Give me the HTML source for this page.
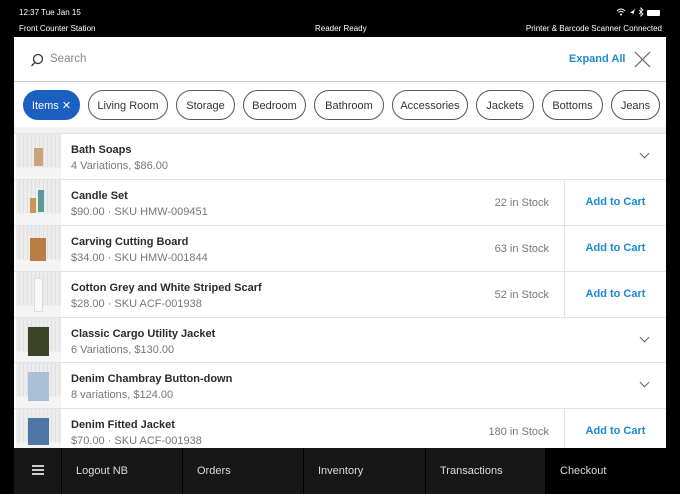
<!DOCTYPE html><html><head><style>
*{margin:0;padding:0;box-sizing:border-box}
body{width:680px;height:494px;background:#000;font-family:"Liberation Sans",sans-serif;position:relative;overflow:hidden}
.a{position:absolute}
.st{color:#fff;font-size:8px}
.panel{left:14px;top:37px;width:652px;height:411px;background:#fff;overflow:hidden}
.chip{position:absolute;top:53px;height:30px;border:1px solid #555;border-radius:15px;font-size:11px;color:#333;line-height:30px;text-align:center}
.row{position:absolute;left:0;width:652px;height:46px;border-top:1px solid #e3e3e3;background:#fff}
.th{position:absolute;left:2px;top:0;width:45px;height:45px;background:linear-gradient(180deg,transparent 0 75%,#f4f4f4 75%),repeating-linear-gradient(90deg,#ececec 0 3px,#e0e0e0 3px 4px)}
.th i{position:absolute;display:block}
.n{position:absolute;left:57px;top:10px;font-size:11px;color:#2b2b2b;font-weight:600}
.s{position:absolute;left:57px;top:26px;font-size:11px;color:#777}
.stk{position:absolute;right:117px;top:17px;font-size:11px;color:#777}
.add{position:absolute;left:550px;top:0;width:102px;height:45px;border-left:1px solid #e3e3e3;color:#1a8ad4;font-size:11px;text-align:center;line-height:45px;font-weight:600}
.chev{position:absolute;right:18px;top:16px;width:7px;height:7px;border-right:1.3px solid #666;border-bottom:1.3px solid #666;transform:rotate(45deg)}
.nav{top:448px;left:14px;width:652px;height:46px;background:#171717}
.nv{position:absolute;top:0;height:46px;line-height:46px;color:#ddd;font-size:11px;border-left:1px solid #000;padding-left:14px}
</style></head><body>
<div class="a st" style="left:19px;top:8px">12:37 Tue Jan 15</div>
<div class="a st" style="left:19px;top:24px">Front Counter Station</div>
<div class="a st" style="left:315px;top:24px">Reader Ready</div>
<div class="a st" style="right:18px;top:24px">Printer &amp; Barcode Scanner Connected</div>
<svg class="a" style="left:616px;top:7px" width="30" height="10"><path d="M1 4Q5 0 9 4M2.5 5.5Q5 3 7.5 5.5" stroke="#fff" fill="none" stroke-width="1"/><circle cx="5" cy="7.5" r="1" fill="#fff"/><path d="M14 6L19 2L17 8L16.5 6Z" fill="#fff"/><path d="M23 3L27 7L25 9V1L27 3L23 7" stroke="#fff" fill="none" stroke-width=".8"/></svg>
<div class="a" style="right:20px;top:10px;width:13px;height:6px;background:#fff;border-radius:1px"></div>
<div class="a panel">
 <div class="a" style="left:0;top:0;width:652px;height:45px;border-bottom:1px solid #ccc"></div>
 <svg class="a" style="left:16px;top:16px" width="14" height="14"><circle cx="8" cy="6" r="4.5" fill="none" stroke="#333" stroke-width="1.3"/><line x1="5" y1="9.3" x2="1.5" y2="13" stroke="#333" stroke-width="1.3"/></svg>
 <div class="a" style="left:36px;top:16px;font-size:11.5px;color:#888">Search</div>
 <div class="a" style="left:555px;top:16px;font-size:11px;color:#1a8ad4;font-weight:bold">Expand All</div>
 <svg class="a" style="left:620px;top:14px" width="17" height="17"><path d="M1 1L16 16M16 1L1 16" stroke="#666" stroke-width="1.2"/></svg>
 <div class="chip" style="left:9px;width:57px;background:#1b5fc1;border-color:#1b5fc1;color:#fff">Items ✕</div>
 <div class="chip" style="left:74px;width:80px">Living Room</div>
 <div class="chip" style="left:162px;width:59px">Storage</div>
 <div class="chip" style="left:229px;width:63px">Bedroom</div>
 <div class="chip" style="left:300px;width:70px">Bathroom</div>
 <div class="chip" style="left:378px;width:76px">Accessories</div>
 <div class="chip" style="left:462px;width:58px">Jackets</div>
 <div class="chip" style="left:528px;width:61px">Bottoms</div>
 <div class="chip" style="left:597px;width:49px">Jeans</div>
 <div class="a" style="left:0;top:90px;width:652px;height:6px;background:#f1f2f4"></div>

 <div class="row" style="top:96px"><div class="th"><i style="left:18px;top:14px;width:9px;height:18px;background:#c8a57a"></i></div><div class="n">Bath Soaps</div><div class="s">4 Variations, $86.00</div><div class="chev"></div></div>
 <div class="row" style="top:142px"><div class="th"><i style="left:14px;top:18px;width:6px;height:15px;background:#c89a50"></i><i style="left:22px;top:10px;width:6px;height:22px;background:#5c9a9a"></i></div><div class="n">Candle Set</div><div class="s">$90.00 · SKU HMW-009451</div><div class="stk">22 in Stock</div><div class="add">Add to Cart</div></div>
 <div class="row" style="top:188px"><div class="th"><i style="left:14px;top:12px;width:16px;height:23px;background:#b77d45"></i></div><div class="n">Carving Cutting Board</div><div class="s">$34.00 · SKU HMW-001844</div><div class="stk">63 in Stock</div><div class="add">Add to Cart</div></div>
 <div class="row" style="top:234px"><div class="th"><i style="left:18px;top:6px;width:9px;height:34px;background:#f8f8f8;border:1px solid #ddd"></i></div><div class="n">Cotton Grey and White Striped Scarf</div><div class="s">$28.00 · SKU ACF-001938</div><div class="stk">52 in Stock</div><div class="add">Add to Cart</div></div>
 <div class="row" style="top:280px"><div class="th"><i style="left:12px;top:9px;width:21px;height:29px;background:#3c4428"></i></div><div class="n">Classic Cargo Utility Jacket</div><div class="s">6 Variations, $130.00</div><div class="chev"></div></div>
 <div class="row" style="top:325px"><div class="th"><i style="left:12px;top:9px;width:21px;height:29px;background:#a9bfd6"></i></div><div class="n">Denim Chambray Button-down</div><div class="s">8 variations, $124.00</div><div class="chev"></div></div>
 <div class="row" style="top:371px"><div class="th"><i style="left:12px;top:9px;width:21px;height:27px;background:#4d77a6"></i></div><div class="n">Denim Fitted Jacket</div><div class="s">$70.00 · SKU ACF-001938</div><div class="stk">180 in Stock</div><div class="add">Add to Cart</div></div>
</div>
<div class="a nav">
 <div class="a" style="left:18px;top:17px;width:12px;height:1.5px;background:#ccc;box-shadow:0 4px 0 #ccc,0 8px 0 #ccc"></div>
 <div class="nv" style="left:47px;width:121px">Logout NB</div>
 <div class="nv" style="left:168px;width:121px">Orders</div>
 <div class="nv" style="left:289px;width:122px">Inventory</div>
 <div class="nv" style="left:411px;width:120px">Transactions</div>
 <div class="nv" style="left:531px;width:121px;background:#000">Checkout</div>
</div>
</body></html>
